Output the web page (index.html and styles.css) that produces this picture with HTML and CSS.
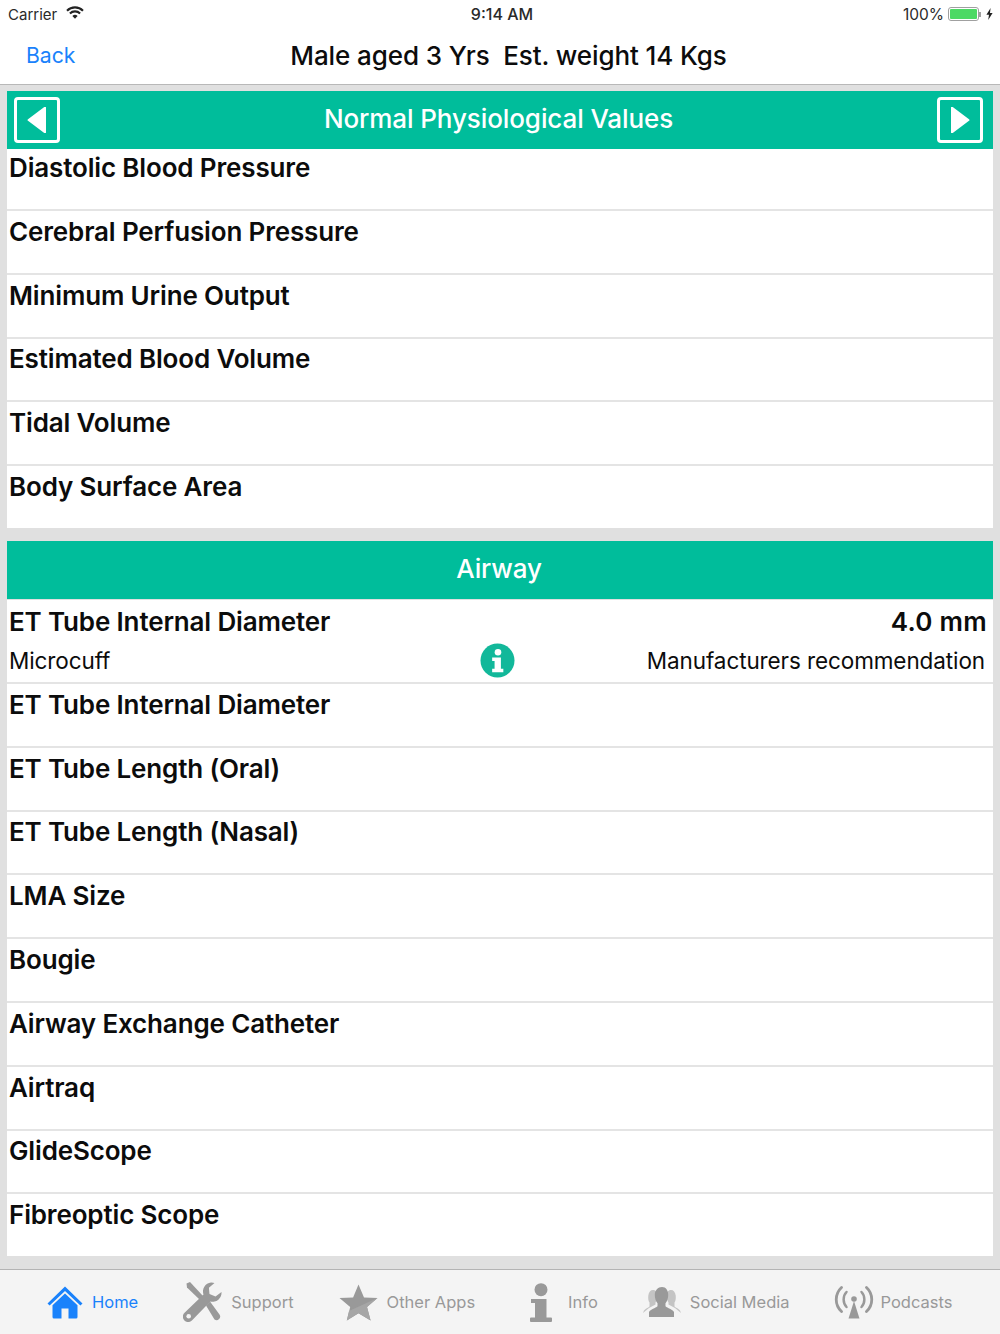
FILE: index.html
```html
<!DOCTYPE html>
<html>
<head>
    <title>Normal Physiological Values</title>
    <link rel="stylesheet" href="styles.css">
</head>
<body>
    <!-- Status bar -->
    <div class="statusBar">
        <div class="statusLeft">
            <span>Carrier</span>
            <svg class="wifiIcon" width="18" height="13" viewBox="0 0 18 13" fill="none" stroke="#222" stroke-width="2.100">
                <path d="M1 4.700a11.400 11.400 0 0 1 16 0"/>
                <path d="M3.900 7.500a7.300 7.300 0 0 1 10.200 0"/>
                <path d="M9 12.800 6.400 10a3.700 3.700 0 0 1 5.200 0z" fill="#222" stroke="none"/>
            </svg>
        </div>
        <div class="statusTime">9:14 AM</div>
        <div class="statusRight">
            <span class="batteryText">100%</span>
            <div class="battery"><div class="batteryFill"></div></div>
            <div class="batteryTip"></div>
            <svg width="7" height="12" viewBox="0 0 7 12">
                <path d="M4.600 0 0.400 6.800h2.600L2.200 12l4.400-7H4z" fill="#222"/>
            </svg>
        </div>
    </div>

    <!-- Navigation bar -->
    <div class="navBar">
        <a class="backLink">Back</a>
        <div class="navTitle">Male aged 3 Yrs&nbsp; Est. weight 14 Kgs</div>
    </div>

    <div class="content">
        <div class="sectionHead firstHead">
            <div class="arrowBox">
                <svg width="20" height="26" viewBox="0 0 20 26"><path d="M19 .5v25a1 1 0 0 1-1.600.6L1 13.800a1 1 0 0 1 0-1.600L17.400-.1a1 1 0 0 1 1.600.6z" fill="#fff"/></svg>
            </div>
            <span>Normal Physiological Values</span>
            <div class="arrowBox">
                <svg width="20" height="26" viewBox="0 0 20 26"><path d="M1 .5v25a1 1 0 0 0 1.600.6L19 13.800a1 1 0 0 0 0-1.600L2.600-.1A1 1 0 0 0 1 .5z" fill="#fff"/></svg>
            </div>
        </div>
        <div class="rowGroup">
            <div class="row">Diastolic Blood Pressure</div>
            <div class="row">Cerebral Perfusion Pressure</div>
            <div class="row">Minimum Urine Output</div>
            <div class="row">Estimated Blood Volume</div>
            <div class="row">Tidal Volume</div>
            <div class="row lastRow">Body Surface Area</div>
        </div>

        <div class="sectionHead secondHead"><span>Airway</span></div>
        <div class="rowGroup">
            <div class="row detailRow">
                <div class="detailTop">
                    <span>ET Tube Internal Diameter</span>
                    <span class="detailValue">4.0 mm</span>
                </div>
                <div class="detailBottom">
                    <span>Microcuff</span>
                    <svg width="35" height="35" viewBox="0 0 36 36">
                        <circle cx="18" cy="18" r="17.500" fill="#12b89a"/>
                        <circle cx="18.500" cy="9.500" r="3.400" fill="#fff"/>
                        <path d="M12.500 15h9v11.500h2.500V30H12.500v-3.500H15V18.500h-2.500z" fill="#fff"/>
                    </svg>
                    <span class="detailNote">Manufacturers recommendation</span>
                </div>
            </div>
            <div class="row">ET Tube Internal Diameter</div>
            <div class="row">ET Tube Length (Oral)</div>
            <div class="row">ET Tube Length (Nasal)</div>
            <div class="row">LMA Size</div>
            <div class="row">Bougie</div>
            <div class="row">Airway Exchange Catheter</div>
            <div class="row">Airtraq</div>
            <div class="row">GlideScope</div>
            <div class="row lastRow">Fibreoptic Scope</div>
        </div>
    </div>

    <!-- Tab bar -->
    <div class="tabBar">
        <div class="tabItem activeTab">
            <svg width="36" height="33" viewBox="0 0 36 33">
                <path d="M18 0.500 35.500 17.500 33.400 19.600 18 5 2.600 19.600 0.500 17.500z" fill="#1a82fb"/>
                <path d="M18 7.500 5.500 19.300V31a1.500 1.500 0 0 0 1.500 1.500h7.500V22.500h7V32.500H29a1.500 1.500 0 0 0 1.500-1.500V19.300z" fill="#1a82fb"/>
            </svg>
            <span>Home</span>
        </div>
        <div class="tabItem">
            <svg width="39" height="40" viewBox="0 0 39 40">
                <path d="M3.500 1.500 7 0l13 14-3.500 3.500L4 5.500z" fill="#999"/>
                <path d="M23 23.500 27 19.500 36.500 32.500a3.600 3.600 0 0 1-5 5z" fill="#999"/>
                <path d="M28 0.500a9 9 0 0 0-7.500 12L1.800 30.500a5.400 5.400 0 1 0 7.600 7.600L27.300 19.500a9 9 0 0 0 11.200-9.500l-6 4.500-6-2.500-.6-6.300L31.500 1A9 9 0 0 0 28 0.500z" fill="#999"/>
                <circle cx="5.700" cy="34.200" r="2.300" fill="#f4f4f4"/>
            </svg>
            <span>Support</span>
        </div>
        <div class="tabItem">
            <svg width="39" height="37" viewBox="0 0 39 37">
                <path d="M19.500 0.500 25 13.500l13.500 0.600-10.500 9 3.600 13.400-12.100-7.300-11.700 7.300L11.200 23.100 0.500 14.100 14.100 13.500z" fill="#999"/>
                <path d="M38.500 14.100 28 23.100l3.600 13.400-12.100-7.300-11.700 7.300 2.200-9.500z" fill="#a6a6a6"/>
            </svg>
            <span>Other Apps</span>
        </div>
        <div class="tabItem infoTab">
            <svg width="22" height="39" viewBox="0 0 22 39">
                <circle cx="11" cy="6.700" r="6.500" fill="#999"/>
                <path d="M1 16h15.500v18.500H21a1 1 0 0 1 1 1V38a1 1 0 0 1-1 1H1a1 1 0 0 1-1-1v-2.500a1 1 0 0 1 1-1h4V20H1z" fill="#999"/>
            </svg>
            <span>Info</span>
        </div>
        <div class="tabItem socialTab">
            <svg width="38" height="30" viewBox="0 0 38 30">
                <path d="M10 3c3 0 4.500 2.500 4.500 6 0 3-1 5-2 6.500v2L6 21l-6 5 1-2.500c1.500-2 4-2.500 5.500-4v-4C5.300 14 5 11 5.300 8.500 5.700 5 7.500 3 10 3z" fill="#c4c4c4"/>
                <path d="M28 3c-3 0-4.500 2.500-4.500 6 0 3 1 5 2 6.500v2L32 21l6 5-1-2.500c-1.500-2-4-2.500-5.500-4v-4c1.200-1.500 1.500-4.500 1.200-7C32.300 5 30.500 3 28 3z" fill="#c4c4c4"/>
                <path d="M19 0c4 0 6.200 3.300 6.200 8 0 3.500-1.200 6.400-2.700 8.300v3c2 1.800 7 3 8.500 5.700V30H6v-5c1.500-2.700 6.500-3.900 8.500-5.700v-3C13 14.400 11.800 11.500 11.800 8 11.800 3.300 15 0 19 0z" fill="#999"/>
            </svg>
            <span>Social Media</span>
        </div>
        <div class="tabItem podcastTab">
            <svg width="40" height="33" viewBox="0 0 40 33" fill="none" stroke="#999" stroke-linecap="round">
                <path d="M7.500 1.500C.500 8 .500 19 7.500 25.500" stroke-width="2.800"/>
                <path d="M32.500 1.500c7 6.500 7 17.500 0 24" stroke-width="2.800"/>
                <path d="M12.500 6c-3.800 4-3.800 11 0 15" stroke-width="2.500"/>
                <path d="M27.500 6c3.800 4 3.800 11 0 15" stroke-width="2.500"/>
                <circle cx="20" cy="13" r="2.800" fill="#999" stroke="none"/>
                <path d="M20 15 25.500 32.500H14.500z" fill="#999" stroke="none"/>
            </svg>
            <span>Podcasts</span>
        </div>
    </div>
</body>
</html>
```

FILE: styles.css
```css
html, body {
    margin: 0;
    padding: 0;
}

body {
    width: 1000px;
    height: 1334px;
    overflow: hidden;
    display: flex;
    flex-direction: column;
    background-color: #e0e0e0;
    font-family: Inter, "Liberation Sans", sans-serif;
    color: #0c0c0c;
}

/* Status bar */
.statusBar {
    height: 28px;
    display: flex;
    align-items: center;
    justify-content: space-between;
    padding: 0 7px 0 8px;
    background-color: #fff;
    font-size: 15px;
    color: #2a2a2a;
}

.statusLeft, .statusRight {
    width: 200px;
    display: flex;
    align-items: center;
}

.statusRight {
    justify-content: flex-end;
}

.statusTime {
    margin-left: 3px;
    font-size: 16px;
    font-weight: 500;
}

.batteryText {
    font-size: 15.500px;
}

.wifiIcon {
    margin-left: 9px;
    margin-bottom: 3px;
}

.battery {
    width: 31px;
    height: 14px;
    margin-left: 4px;
    padding: 1px;
    border: 1px solid #a0a0a0;
    border-radius: 3px;
    box-sizing: border-box;
}

.batteryFill {
    height: 100%;
    background-color: #4cd964;
    border-radius: 1px;
}

.batteryTip {
    width: 2px;
    height: 5px;
    margin: 0 5px 0 0;
    background-color: #a0a0a0;
}

/* Navigation bar */
.navBar {
    height: 57px;
    position: relative;
    display: flex;
    align-items: center;
    justify-content: center;
    box-sizing: border-box;
    background-color: #fff;
    border-bottom: 1px solid #b8b8b8;
}

.backLink {
    position: absolute;
    left: 26px;
    top: 14px;
    font-size: 21.200px;
    color: #1a82fb;
}

.navTitle {
    font-size: 26px;
    font-weight: 500;
    letter-spacing: -0.100px;
    margin-left: 17px;
    margin-bottom: 2px;
}

/* Table */
.content {
    flex: 1;
    padding: 6px 7px 0 7px;
}

.sectionHead {
    height: 58px;
    display: flex;
    align-items: center;
    justify-content: center;
    background-color: #00bd9b;
    color: #fff;
    font-size: 26px;
    font-weight: 500;
    letter-spacing: -0.100px;
}

.firstHead {
    justify-content: space-between;
    padding: 0 10px 0 7px;
}

.firstHead span {
    margin-bottom: 3px;
}

.secondHead {
    margin-top: 13px;
    margin-bottom: 1px;
    padding: 0 2px 2px 0;
    box-sizing: border-box;
}

.arrowBox {
    width: 46px;
    height: 46px;
    box-sizing: border-box;
    display: flex;
    align-items: center;
    justify-content: center;
    border: 3px solid #fff;
    border-radius: 4px;
}

.rowGroup {
    background-color: #fff;
}

.row {
    height: 62px;
    margin-bottom: 1.800px;
    box-sizing: border-box;
    padding: 2px 3px 0 2px;
    border-bottom: 2px solid #e4e4e4;
    font-size: 26px;
    font-weight: 600;
    line-height: 34px;
    letter-spacing: -0.150px;
}

.lastRow {
    height: 60px;
    margin-bottom: 0;
    border-bottom: none;
}

.detailRow {
    height: 84px;
    padding-top: 5px;
}

.detailTop, .detailBottom {
    display: flex;
    justify-content: space-between;
    align-items: center;
}

.detailTop {
    padding-right: 3px;
}

.detailValue {
    letter-spacing: 0.300px;
}

/* Three columns so the info icon stays in the middle */
.detailBottom {
    height: 42px;
    margin-top: 1px;
    display: grid;
    grid-template-columns: 1fr 35px 1fr;
    padding-right: 5px;
    font-size: 22.500px;
    font-weight: 400;
    letter-spacing: -0.100px;
}

.detailNote {
    text-align: right;
}

/* Tab bar */
.tabBar {
    height: 65px;
    box-sizing: border-box;
    display: flex;
    align-items: center;
    gap: 45px;
    padding: 0 0 0 47px;
    background-color: #f4f4f4;
    border-top: 1px solid #b4b4b4;
    font-size: 16.500px;
    color: #999;
}

.tabItem {
    display: flex;
    align-items: center;
    gap: 9px;
}

.activeTab {
    color: #1a82fb;
}

.infoTab {
    margin-left: 10px;
    gap: 16px;
}

.podcastTab {
    margin-left: -1px;
    gap: 7px;
}
```
